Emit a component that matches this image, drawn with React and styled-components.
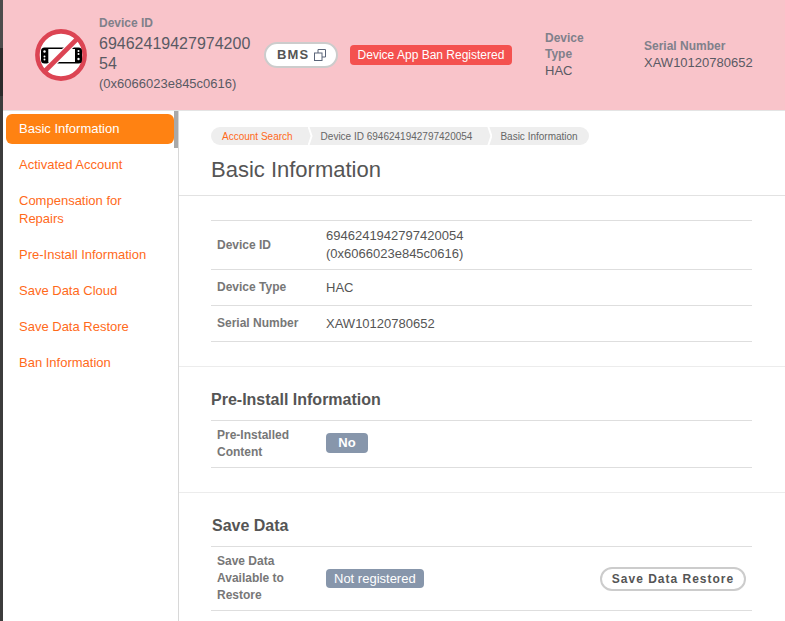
import React from "react";
import styled, { createGlobalStyle } from "styled-components";

const GlobalStyle = createGlobalStyle`
  html, body {
    margin: 0;
    height: 100%;
    overflow: hidden;
    background: #fff;
  }
  body {
    font-family: "Liberation Sans", Arial, sans-serif;
    color: #555;
  }
  * { box-sizing: border-box; }
`;

const Page = styled.div`
  display: flex;
  height: 621px;
  overflow: hidden;
`;
const Strip = styled.div`
  flex: 0 0 3px;
  background: linear-gradient(#4c4c4c 0 48px, #2b2b2b 48px 96px, #3c3c3c 96px);
`;
const Body = styled.div`
  flex: 1;
  min-width: 0;
  display: flex;
  flex-direction: column;
`;

// pink device header
const Header = styled.header`
  flex: 0 0 111px;
  display: flex;
  align-items: center;
  padding: 0 0 1px 32px;
  background: #f9c4ca;
  border-bottom: 1px solid #e4e4e4;
`;
const HeaderIcon = styled.svg`
  flex: 0 0 52px;
  width: 52px;
  height: 52px;
  margin-right: 12px;
`;
const IdBlock = styled.div`
  flex: 0 0 153px;
  margin-right: 12px;
`;
const HeadLabel = styled.div`
  max-width: ${(p) => p.$wrap || "none"};
  margin-bottom: ${(p) => p.$gap || 0}px;
  font-size: 12px;
  font-weight: bold;
  line-height: 16px;
  color: #80808a;
`;
const BigValue = styled.div`
  font-size: 16px;
  line-height: 20px;
  word-break: break-all;
  color: #5a5a64;
`;
const HexValue = styled.div`
  font-size: 13px;
  line-height: 20px;
  color: #5a5a64;
`;
const BmsButton = styled.button`
  display: flex;
  align-items: center;
  gap: 4px;
  width: 74px;
  height: 26px;
  padding: 0 0 0 11px;
  margin-right: 12px;
  font: bold 13px "Liberation Sans", Arial, sans-serif;
  letter-spacing: 1.2px;
  color: #555;
  background: #fff;
  border: 2px solid #ccc;
  border-radius: 13px;
`;
const BanBadge = styled.span`
  flex: 0 0 162px;
  height: 20px;
  margin-right: 33px;
  font-size: 12px;
  line-height: 20px;
  text-align: center;
  color: #fff;
  background: #f4514f;
  border-radius: 4px;
`;
const HeadField = styled.div`
  flex: 0 0 ${(p) => p.$width}px;
`;
const HeadValue = styled.div`
  font-size: 13px;
  line-height: 17px;
  color: #5a5a64;
`;

const Columns = styled.div`
  flex: 1;
  min-height: 0;
  display: flex;
`;

// left menu
const Side = styled.nav`
  position: relative;
  flex: 0 0 176px;
  padding: 3px 4px 0 3px;
  border-right: 1px solid #d8d8d8;
`;
const ScrollThumb = styled.div`
  position: absolute;
  top: 0;
  right: 0;
  width: 4px;
  height: 37px;
  background: #a9a9a9;
`;
const MenuItem = styled.a`
  display: block;
  margin-bottom: 6px;
  padding: 6px 13px;
  font-size: 13px;
  line-height: 18px;
  color: ${(p) => (p.$active ? "#fff" : "#ff6a1a")};
  background: ${(p) => (p.$active ? "#ff8212" : "transparent")};
  border-radius: 6px;
`;

// main column
const Main = styled.main`
  flex: 1;
  min-width: 0;
`;
const PageHead = styled.div`
  height: 85px;
  padding: 16px 32px 0;
  border-bottom: 1px solid #e2e2e2;
`;
const Crumbs = styled.ol`
  display: flex;
  align-items: center;
  width: fit-content;
  height: 18px;
  margin: 0;
  padding: 0;
  list-style: none;
  background: #eee;
  border-radius: 9px;
  font-size: 10px;
`;
const Crumb = styled.li`
  height: 18px;
  line-height: 16px;
  color: ${(p) => (p.$link ? "#ff6a1a" : "#666")};
  padding: 2px ${(p) => (p.$last ? 11 : 15)}px 0 ${(p) => (p.$first ? 11 : 8)}px;
`;
const CrumbGap = styled.li`
  width: 5px;
  height: 18px;
  background: #fff;
  clip-path: polygon(0 0, 40% 0, 100% 50%, 40% 100%, 0 100%, 60% 50%);
`;
const PageTitle = styled.h1`
  margin: 12px 0 0;
  font-size: 22px;
  font-weight: normal;
  line-height: 26px;
  color: #555;
`;
const Section = styled.section`
  padding: ${(p) => p.$top}px 33px 24px 32px;
  border-bottom: 1px solid #ececec;
`;
const SectionTitle = styled.h2`
  margin: 0 0 10px ${(p) => p.$indent || 0}px;
  font-size: 16px;
  font-weight: bold;
  line-height: 20px;
  color: #555;
`;
const Table = styled.div`
  border-top: 1px solid #dedede;
`;
const Row = styled.div`
  display: grid;
  grid-template-columns: 115px 1fr auto;
  align-items: center;
  min-height: 36px;
  padding: 6px 6px 6px 0;
  border-bottom: 1px solid #dedede;
`;
const RowLabel = styled.div`
  padding-left: 6px;
  font-size: 12px;
  font-weight: bold;
  line-height: 17px;
  color: #777;
`;
const RowValue = styled.div`
  font-size: 13px;
  line-height: 18px;
  color: #555;
`;
const Tag = styled.span`
  display: block;
  width: fit-content;
  min-width: 42px;
  margin-bottom: ${(p) => (p.$light ? 0 : 2)}px;
  padding: 0 8px;
  font-size: 13px;
  font-weight: ${(p) => (p.$light ? "normal" : "bold")};
  line-height: ${(p) => (p.$light ? 19 : 20)}px;
  text-align: center;
  color: #fff;
  background: #8796ab;
  border-radius: 4px;
`;
const OutlineButton = styled.button`
  width: 146px;
  height: 24px;
  padding: 0;
  font: bold 12px "Liberation Sans", Arial, sans-serif;
  letter-spacing: 1px;
  color: #555;
  background: #fff;
  border: 2px solid #ccc;
  border-radius: 12px;
`;

const NoSwitchIcon = () => (
  <HeaderIcon viewBox="0 0 52 52">
    <circle cx="26" cy="26" r="23.6" fill="#fff" stroke="#dc4453" strokeWidth="4.6" />
    <rect x="6" y="18.5" width="41" height="16" rx="3.5" fill="#000" />
    <rect x="13.3" y="20" width="26.7" height="13" fill="#fff" />
    <circle cx="9.5" cy="22.5" r="1.2" fill="#fff" />
    <circle cx="9.5" cy="27.5" r="1" fill="#fff" />
    <circle cx="9.5" cy="30.5" r="1" fill="#fff" />
    <circle cx="43.5" cy="22" r="1" fill="#fff" />
    <circle cx="43.5" cy="25" r="1" fill="#fff" />
    <circle cx="43.5" cy="30" r="1.2" fill="#fff" />
    <line x1="39" y1="13" x2="13" y2="39" stroke="#fff" strokeWidth="7" />
    <line x1="43" y1="9" x2="9" y2="43" stroke="#dc4453" strokeWidth="4.6" />
  </HeaderIcon>
);

const WindowIcon = () => (
  <svg width="12" height="12" viewBox="0 0 12 12" fill="none" stroke="#5a6478" strokeWidth="1">
    <path d="M4 4V0.5H11.5V8H8" />
    <rect x="0.5" y="4" width="7.5" height="7.5" />
  </svg>
);

const menu = [
  "Basic Information",
  "Activated Account",
  "Compensation for Repairs",
  "Pre-Install Information",
  "Save Data Cloud",
  "Save Data Restore",
  "Ban Information",
];

export default function App() {
  return (
    <Page>
      <GlobalStyle />
      <Strip />
      <Body>
        <Header>
          <NoSwitchIcon />
          <IdBlock>
            <HeadLabel $gap={3}>Device ID</HeadLabel>
            <BigValue>6946241942797420054</BigValue>
            <HexValue>(0x6066023e845c0616)</HexValue>
          </IdBlock>
          <BmsButton>
            BMS
            <WindowIcon />
          </BmsButton>
          <BanBadge>Device App Ban Registered</BanBadge>
          <HeadField $width={99}>
            <HeadLabel $wrap="50px">Device Type</HeadLabel>
            <HeadValue>HAC</HeadValue>
          </HeadField>
          <HeadField $width={110}>
            <HeadLabel>Serial Number</HeadLabel>
            <HeadValue>XAW10120780652</HeadValue>
          </HeadField>
        </Header>
        <Columns>
          <Side>
            <ScrollThumb />
            {menu.map((item, i) => (
              <MenuItem key={item} $active={i === 0}>
                {item}
              </MenuItem>
            ))}
          </Side>
          <Main>
            <PageHead>
              <Crumbs>
                <Crumb $link $first>Account Search</Crumb>
                <CrumbGap />
                <Crumb>Device ID 6946241942797420054</Crumb>
                <CrumbGap />
                <Crumb $last>Basic Information</Crumb>
              </Crumbs>
              <PageTitle>Basic Information</PageTitle>
            </PageHead>
            <Section $top={24}>
              <Table>
                <Row>
                  <RowLabel>Device ID</RowLabel>
                  <RowValue>
                    6946241942797420054
                    <br />
                    (0x6066023e845c0616)
                  </RowValue>
                </Row>
                <Row>
                  <RowLabel>Device Type</RowLabel>
                  <RowValue>HAC</RowValue>
                </Row>
                <Row>
                  <RowLabel>Serial Number</RowLabel>
                  <RowValue>XAW10120780652</RowValue>
                </Row>
              </Table>
            </Section>
            <Section $top={23}>
              <SectionTitle>Pre-Install Information</SectionTitle>
              <Table>
                <Row>
                  <RowLabel>
                    Pre-Installed
                    <br />
                    Content
                  </RowLabel>
                  <Tag>No</Tag>
                </Row>
              </Table>
            </Section>
            <Section $top={23}>
              <SectionTitle $indent={1}>Save Data</SectionTitle>
              <Table>
                <Row>
                  <RowLabel>
                    Save Data
                    <br />
                    Available to
                    <br />
                    Restore
                  </RowLabel>
                  <Tag $light>Not registered</Tag>
                  <OutlineButton>Save Data Restore</OutlineButton>
                </Row>
              </Table>
            </Section>
          </Main>
        </Columns>
      </Body>
    </Page>
  );
}
